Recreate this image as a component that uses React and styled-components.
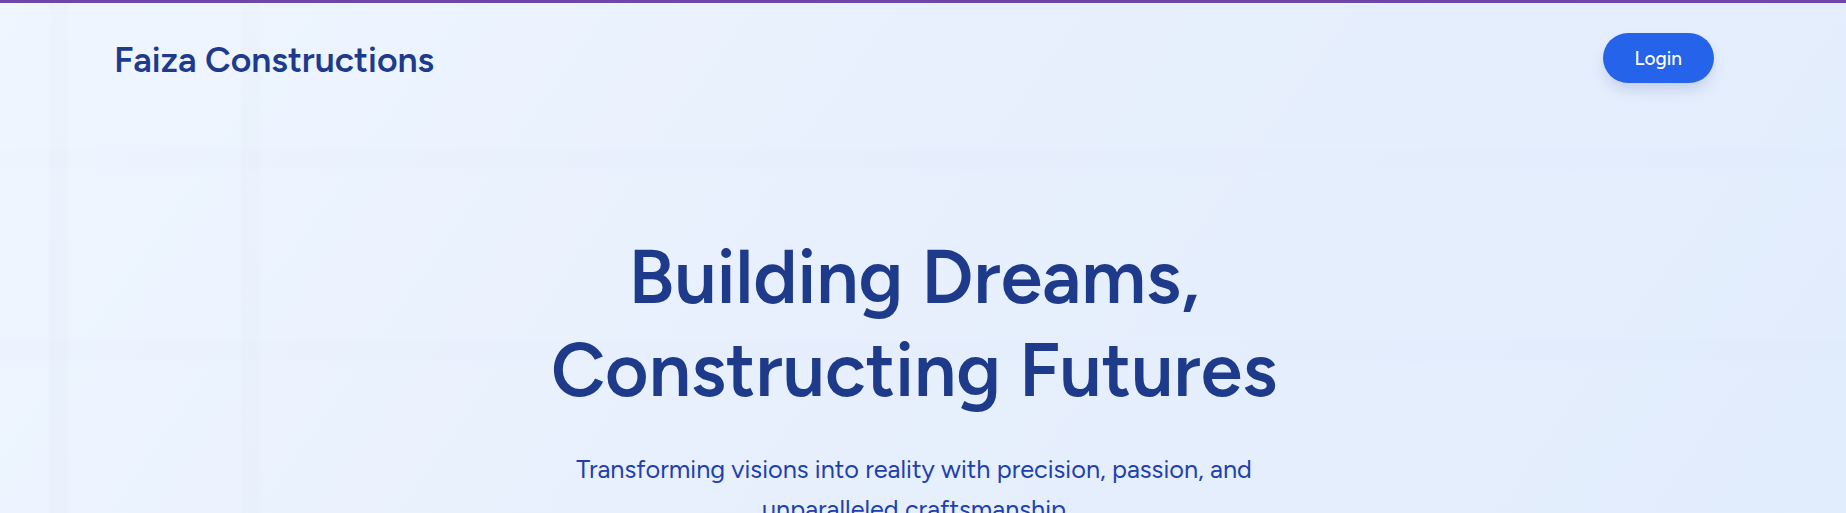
import React from 'react';
import styled, { createGlobalStyle } from 'styled-components';

const GlobalStyle = createGlobalStyle`
  html, body {
    margin: 0;
    padding: 0;
  }
  body {
    font-family: Figtree, Inter, "Noto Sans", sans-serif;
    background: #e8f0fd;
  }
`

// faint blurred-blueprint look behind everything
const Page = styled.div`
  min-height: 100vh;
  box-sizing: border-box;
  border-top: 3px solid #6c47a7;
  padding-right: 18px;
  background-color: #e8f0fd;
  background-image:
    linear-gradient(90deg, transparent 49px, rgba(60, 70, 150, 0.016) 49px 68px, transparent 68px 241px, rgba(60, 70, 150, 0.01) 241px 260px, transparent 260px),
    linear-gradient(180deg, transparent 147px, rgba(60, 70, 150, 0.007) 147px 166px, transparent 166px 338px, rgba(60, 70, 150, 0.008) 338px 358px, transparent 358px),
    linear-gradient(125deg, #eff6ff 0%, #e8f0fd 45%, #e1ecfc 100%);
`

const Container = styled.div`
  max-width: 1600px;
  margin: 0 auto;
`

const Nav = styled.nav`
  display: flex;
  justify-content: space-between;
  align-items: center;
  padding-top: 30px;
`

const Logo = styled.div`
  font-size: 35.5px;
  font-weight: 600;
  color: #1e3a8a;
  padding-top: 3px;
`

const LoginButton = styled.button`
  height: 50px;
  padding: 0 32px;
  border: none;
  border-radius: 9999px;
  background: #2563eb;
  color: #fff;
  font-family: inherit;
  font-size: 19px;
  font-weight: 500;
  box-shadow: 0 8px 16px -4px rgba(30, 58, 138, 0.22);
  cursor: pointer;
`

const Hero = styled.section`
  display: flex;
  flex-direction: column;
  align-items: center;
  text-align: center;
  padding-top: 148px;
`

const Title = styled.h1`
  margin: 0;
  font-size: 75px;
  line-height: 93px;
  font-weight: 600;
  color: #1e3a8a;
`

const Subtitle = styled.p`
  margin: 32px 0 0;
  max-width: 700px;
  font-size: 25.3px;
  line-height: 40px;
  font-weight: 400;
  color: #1e40af;
`

const App = () => {
  return (
    <>
      <GlobalStyle />
      <Page>
        <Container>
          <Nav>
            <Logo>Faiza Constructions</Logo>
            <LoginButton>Login</LoginButton>
          </Nav>
          <Hero>
            <Title>
              Building Dreams,
              <br />
              Constructing Futures
            </Title>
            <Subtitle>
              Transforming visions into reality with precision, passion, and unparalleled craftsmanship
            </Subtitle>
          </Hero>
        </Container>
      </Page>
    </>
  )
}

export default App;
